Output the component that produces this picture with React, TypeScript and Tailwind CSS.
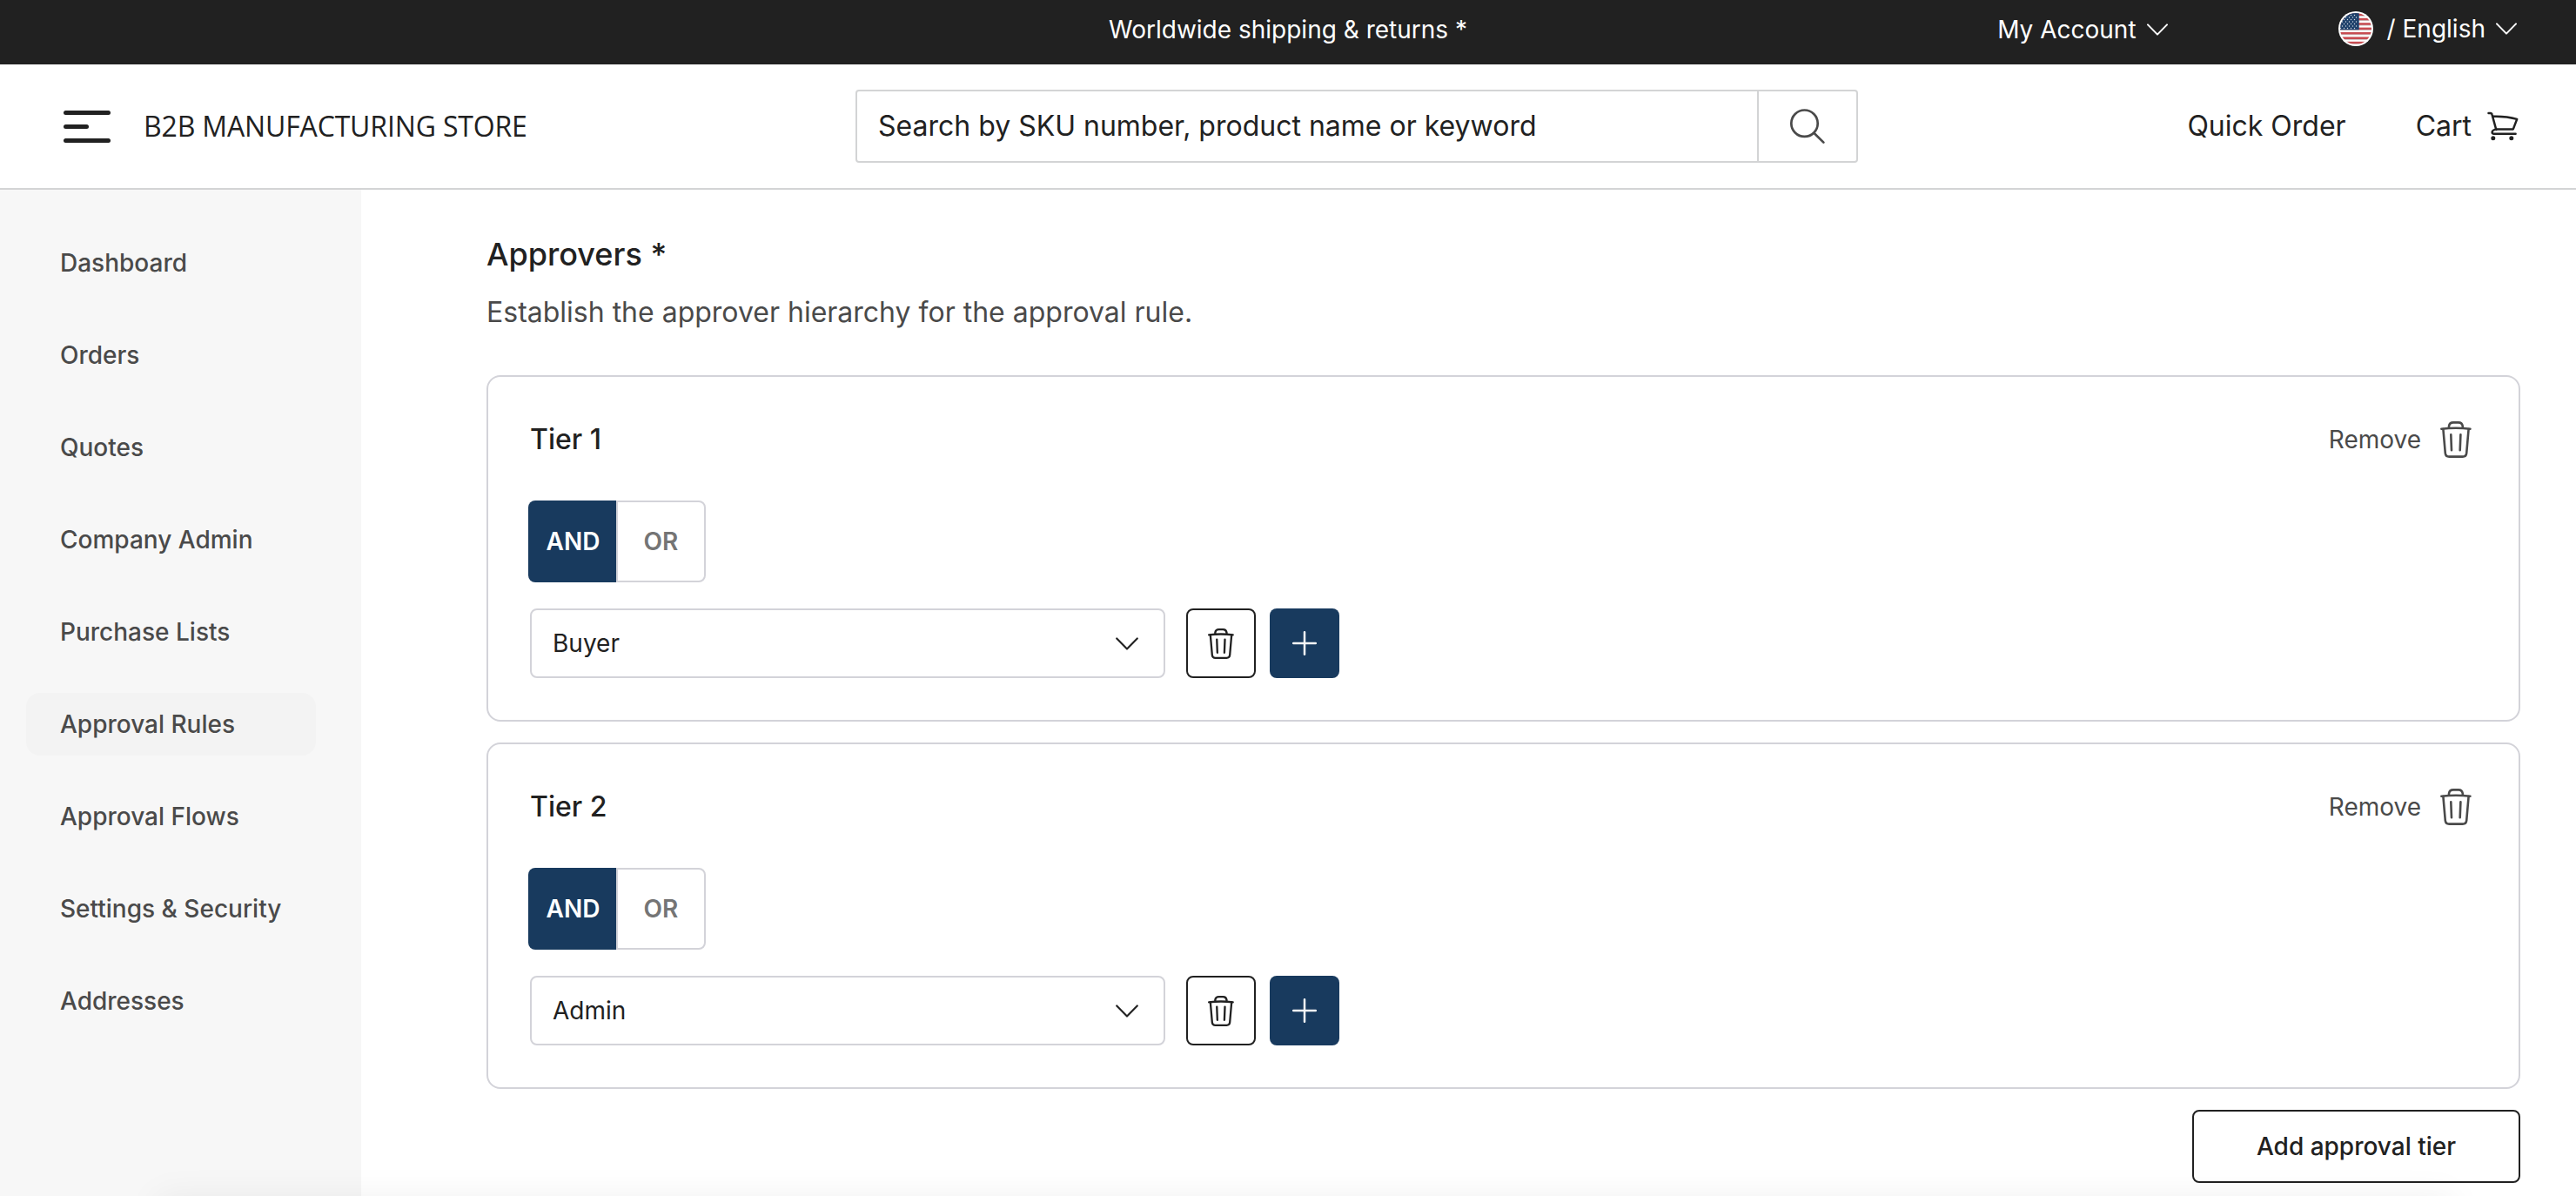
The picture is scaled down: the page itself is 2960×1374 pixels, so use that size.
import clsx from 'clsx'

interface Tier {
  id: number
  title: string
  operator: 'AND' | 'OR'
  role: string
}

const NAV_ITEMS = [
  'Dashboard',
  'Orders',
  'Quotes',
  'Company Admin',
  'Purchase Lists',
  'Approval Rules',
  'Approval Flows',
  'Settings & Security',
  'Addresses',
]

const TIERS: Tier[] = [
  { id: 1, title: 'Tier 1', operator: 'AND', role: 'Buyer' },
  { id: 2, title: 'Tier 2', operator: 'AND', role: 'Admin' },
]

const RED_STRIPES = [0, 1, 2, 3, 4, 5, 6]

const STAR_ROWS = [4.5, 7, 9.5, 12, 14.5, 17, 19.5]

function ChevronDown({ className }: { className?: string }) {
  return (
    <svg viewBox="0 0 24 14" fill="none" stroke="currentColor" className={className}>
      <path d="M1 1.4 12 12.6 23 1.4" strokeWidth="2" strokeLinecap="round" strokeLinejoin="round" />
    </svg>
  )
}

function TrashIcon({ className, strokeWidth = 2.6 }: { className?: string; strokeWidth?: number }) {
  return (
    <svg
      viewBox="0 0 36 42"
      fill="none"
      stroke="currentColor"
      strokeWidth={strokeWidth}
      strokeLinecap="round"
      strokeLinejoin="round"
      className={className}
    >
      <path d="M1.4 8.8Q18 6.8 34.4 8.8" />
      <path d="M10 7.4V5.6Q10.6 1.4 15 1.4H21Q25 1.4 25.8 5.6V7.4" />
      <path d="M3.4 9 5.8 36.6Q6.2 40.6 10.2 40.6H25.8Q29.8 40.6 30.2 36.6L32.6 9" />
      <path d="M12.3 15.2 13 33.3M23.4 15.2 22.7 33.3" />
    </svg>
  )
}

function CartIcon() {
  return (
    <svg
      viewBox="0 0 38 36"
      fill="none"
      stroke="currentColor"
      strokeWidth="2.5"
      strokeLinecap="round"
      strokeLinejoin="round"
      className="w-[38px] h-9"
    >
      <path d="M2.5 3H4.6Q6.2 3 6.6 4.8L11.3 22" />
      <path d="M7.4 6.8Q22 6.2 35.2 9.9L30.8 21.4H11.6Q6.8 22.4 6.6 24.8 6.6 26.7 8.6 26.7H33.6" />
      <circle cx="7.8" cy="31.8" r="2.5" fill="currentColor" stroke="none" />
      <circle cx="28.8" cy="31.8" r="2.5" fill="currentColor" stroke="none" />
    </svg>
  )
}

function FlagIcon() {
  return (
    <svg viewBox="0 0 40 40" className="w-10 h-10">
      <defs>
        <clipPath id="flag">
          <circle cx="20" cy="20" r="18" />
        </clipPath>
      </defs>
      <circle cx="20" cy="20" r="20" fill="#fff" />
      <g clipPath="url(#flag)">
        {RED_STRIPES.map((i) => (
          <g key={i}>
            <rect x="0" y={2.4 + i * 5.4} width="40" height="2.7" fill="#c84c52" />
            <rect x="0" y={5 + i * 5.4} width="40" height="0.6" fill="#b9b3b3" />
          </g>
        ))}
        <rect x="0" y="0" width="23.7" height="21.2" fill="#1f416b" />
        {STAR_ROWS.map((y, row) =>
          [2.5, 6.5, 10.5, 14.5, 18.5].map((x) => (
            <circle key={x} cx={x + (row % 2) * 2} cy={y} r="0.7" fill="#d5dbe3" />
          ))
        )}
      </g>
    </svg>
  )
}

function TopBar() {
  return (
    <div className="grid grid-cols-[1fr_auto_1fr] items-center h-[74px] pb-[6px] bg-[#212121] text-white text-[28px] leading-9">
      <span className="col-start-2">Worldwide shipping &amp; returns *</span>
      <div className="flex items-center justify-end pr-[68px]">
        <button className="flex items-center gap-3 mr-[196px]">
          My Account
          <ChevronDown className="w-6 h-3.5" />
        </button>
        <button className="flex items-center pb-[2px]">
          <FlagIcon />
          <span className="ml-4 mr-3">/ English</span>
          <ChevronDown className="w-6 h-3.5" />
        </button>
      </div>
    </div>
  )
}

function Header() {
  return (
    <header className="flex items-center h-36 border-b-2 border-[#d3d4d5] text-[32px] leading-10">
      <div className="flex items-center w-[983px] pl-[73px]">
        <div className="flex flex-col gap-[11px]">
          <span className="w-[54px] h-[5px] rounded-full bg-[#212121]" />
          <span className="w-[29px] h-[5px] rounded-full bg-[#212121]" />
          <span className="w-[54px] h-[5px] rounded-full bg-[#212121]" />
        </div>
        <span className="ml-[38px] font-['Open_Sans',sans-serif] tracking-[-0.15px]">
          B2B MANUFACTURING STORE
        </span>
      </div>

      <div className="flex w-[1152px] h-[84px] border-2 border-[#d3d4d5] rounded-sm">
        <div className="flex-1 flex items-center pl-6 border-r-2 border-[#d3d4d5]">
          Search by SKU number, product name or keyword
        </div>
        <button className="flex items-center justify-center w-28 text-[#4a4a4a]">
          <svg
            viewBox="0 0 42 42"
            fill="none"
            stroke="currentColor"
            strokeWidth="2.7"
            strokeLinecap="round"
            className="w-[42px] h-[42px]"
          >
            <circle cx="17.5" cy="17.7" r="15.2" />
            <path d="M28.6 29 39.4 39.6" />
          </svg>
        </button>
      </div>

      <div className="flex items-center ml-auto pr-[65px]">
        <span className="mr-20">Quick Order</span>
        <span className="mr-[17px]">Cart</span>
        <CartIcon />
      </div>
    </header>
  )
}

function Sidebar({ active }: { active: string }) {
  return (
    <nav className="flex flex-col gap-[34px] w-[415px] pt-12 pl-[30px] pr-[52px] bg-[#f7f7f7]">
      {NAV_ITEMS.map((item) => (
        <a
          key={item}
          className={clsx(
            'flex items-center h-[72px] pl-[39px] rounded-2xl text-[28px] font-medium text-[#4a4a4a]',
            item === active && 'bg-[#f3f3f3]'
          )}
        >
          {item}
        </a>
      ))}
    </nav>
  )
}

function TierCard({ tier }: { tier: Tier }) {
  return (
    <section className="pt-[51px] pb-12 pl-12 pr-[54px] border-2 border-[#d3d3d9] rounded-2xl">
      <div className="flex items-center justify-between h-[42px]">
        <h3 className="text-[32px] leading-10 font-medium">{tier.title}</h3>
        <button className="flex items-center gap-[22px] text-[28px] text-[#4a4a4a]">
          Remove
          <TrashIcon className="w-9 h-[42px]" />
        </button>
      </div>

      {/* operator toggle */}
      <div className="flex h-[94px] mt-[49px] -ml-[2px] text-[28px] font-semibold">
        {(['AND', 'OR'] as const).map((op) => (
          <button
            key={op}
            className={clsx(
              'first:rounded-l-lg first:w-[101px] first:pl-[2px] last:rounded-r-lg last:w-[103px]',
              op === tier.operator
                ? 'bg-[#183a5e] text-white'
                : 'border-2 border-[#d3d3d9] text-[#757575]'
            )}
          >
            {op}
          </button>
        ))}
      </div>

      {/* approver row */}
      <div className="flex mt-[30px] h-20">
        <div className="flex items-center justify-between w-[730px] pl-6 pr-[29px] border-2 border-[#d3d3d9] rounded-lg text-[28px]">
          {tier.role}
          <ChevronDown className="w-[26px] h-[15px]" />
        </div>
        <button className="flex items-center justify-center w-20 ml-6 border-2 border-[#212121] rounded-lg">
          <TrashIcon className="w-[30px] h-[35px]" strokeWidth={2.8} />
        </button>
        <button className="flex items-center justify-center w-20 ml-4 rounded-lg bg-[#183a5e] text-[#f7f7f7]">
          <svg viewBox="0 0 28 28" stroke="currentColor" strokeWidth="2.5" strokeLinecap="round" className="w-7 h-7">
            <path d="M14 1.2V26.8M1.2 14H26.8" />
          </svg>
        </button>
      </div>
    </section>
  )
}

export default function App() {
  return (
    <div className="relative flex flex-col w-[2960px] h-[1374px] overflow-hidden bg-white text-[#212121] font-['Inter',sans-serif]">
      <TopBar />
      <Header />
      <div className="flex flex-1">
        <Sidebar active="Approval Rules" />
        <main className="flex-1 pt-[50px] pl-36 pr-16">
          <h2 className="text-[36px] leading-[48px] font-medium">Approvers *</h2>
          <p className="mt-[19px] text-[32px] leading-[48px] text-[#4a4a4a]">
            Establish the approver hierarchy for the approval rule.
          </p>
          <div className="flex flex-col gap-6 mt-12">
            {TIERS.map((tier) => (
              <TierCard key={tier.id} tier={tier} />
            ))}
            <button className="self-end w-[377px] h-[84px] border-2 border-[#212121] rounded-lg text-[28px] font-medium">
              Add approval tier
            </button>
          </div>
        </main>
      </div>

      {/* shadow of the sticky footer that starts right below the fold */}
      <div className="absolute top-full left-[180px] right-[140px] h-20 shadow-[0_0_40px_rgba(0,0,0,0.06)]" />
    </div>
  )
}
